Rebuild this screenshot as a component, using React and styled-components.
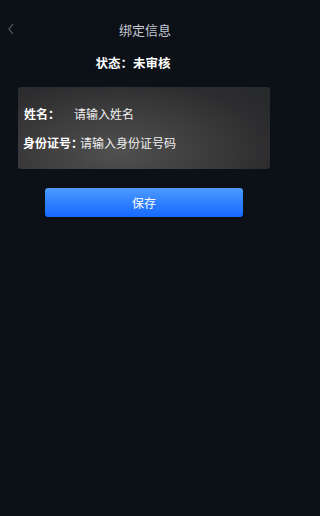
import React from "react";
import styled, { createGlobalStyle } from "styled-components";

const Global = createGlobalStyle`
  html, body { margin: 0; padding: 0; background: #0c1017; }
  body { font-family: "Noto Sans CJK SC", "Noto Sans", sans-serif; }
`;

const Page = styled.div`
  width: 290px;
  height: 516px;
  background: #0c1017;
  display: flex;
  flex-direction: column;
  align-items: center;
  overflow: hidden;
`;

const NavBar = styled.div`
  width: 100%;
  height: 44px;
  margin-top: 7px;
  display: grid;
  grid-template-columns: 40px 1fr 40px;
  align-items: center;
`;

const Back = styled.div`
  padding-left: 7px;
  display: flex;
  align-items: center;
`;

const Title = styled.div`
  text-align: center;
  color: #c6cad2;
  font-size: 13px;
  line-height: 16px;
  margin-top: 1px;
`;

const Status = styled.div`
  color: #ffffff;
  font-size: 12.5px;
  font-weight: 700;
  line-height: 18px;
  margin-top: 3px;
  margin-right: 24px;
`;

const Card = styled.div`
  box-sizing: border-box;
  width: 252px;
  height: 82px;
  margin-top: 15px;
  margin-left: -2px;
  border-radius: 3px;
  background: radial-gradient(ellipse 75% 110% at 40% 80%, #505050 0%, #3d3d3e 45%, #2d2d2f 80%, #28292b 100%);
  padding: 18px 0 0 6px;
  display: flex;
  flex-direction: column;
  gap: 12px;
`;

const Row = styled.div`
  display: flex;
  align-items: center;
  height: 17px;
`;

const Label = styled.span`
  color: #ffffff;
  font-weight: 700;
  font-size: 12px;
  width: ${(p) => p.$w}px;
  margin-left: ${(p) => p.$shift || 0}px;
  flex-shrink: 0;
  white-space: nowrap;
`;

const Placeholder = styled.span`
  color: #f0f0f0;
  font-size: 12px;
  white-space: nowrap;
`;

const SaveButton = styled.button`
  margin-top: 19px;
  margin-left: -2px;
  width: 198px;
  height: 29px;
  border: none;
  border-radius: 3px;
  background: linear-gradient(180deg, #4e9bff 0%, #2f80ff 50%, #1769ff 100%);
  color: #ffffff;
  font-family: inherit;
  font-size: 12px;
  padding: 0;
`;

export default function App() {
  return (
    <>
      <Global />
      <Page>
        <NavBar>
          <Back>
            <svg width="8" height="12" viewBox="0 0 8 12">
              <path d="M6 1 L2 6 L6 11" stroke="#5a5f66" strokeWidth="1.2" fill="none" />
            </svg>
          </Back>
          <Title>绑定信息</Title>
          <div />
        </NavBar>
        <Status>状态：未审核</Status>
        <Card>
          <Row>
            <Label $w={50}>姓名：</Label>
            <Placeholder>请输入姓名</Placeholder>
          </Row>
          <Row>
            <Label $w={57} $shift={-1}>身份证号：</Label>
            <Placeholder>请输入身份证号码</Placeholder>
          </Row>
        </Card>
        <SaveButton>保存</SaveButton>
      </Page>
    </>
  );
}
